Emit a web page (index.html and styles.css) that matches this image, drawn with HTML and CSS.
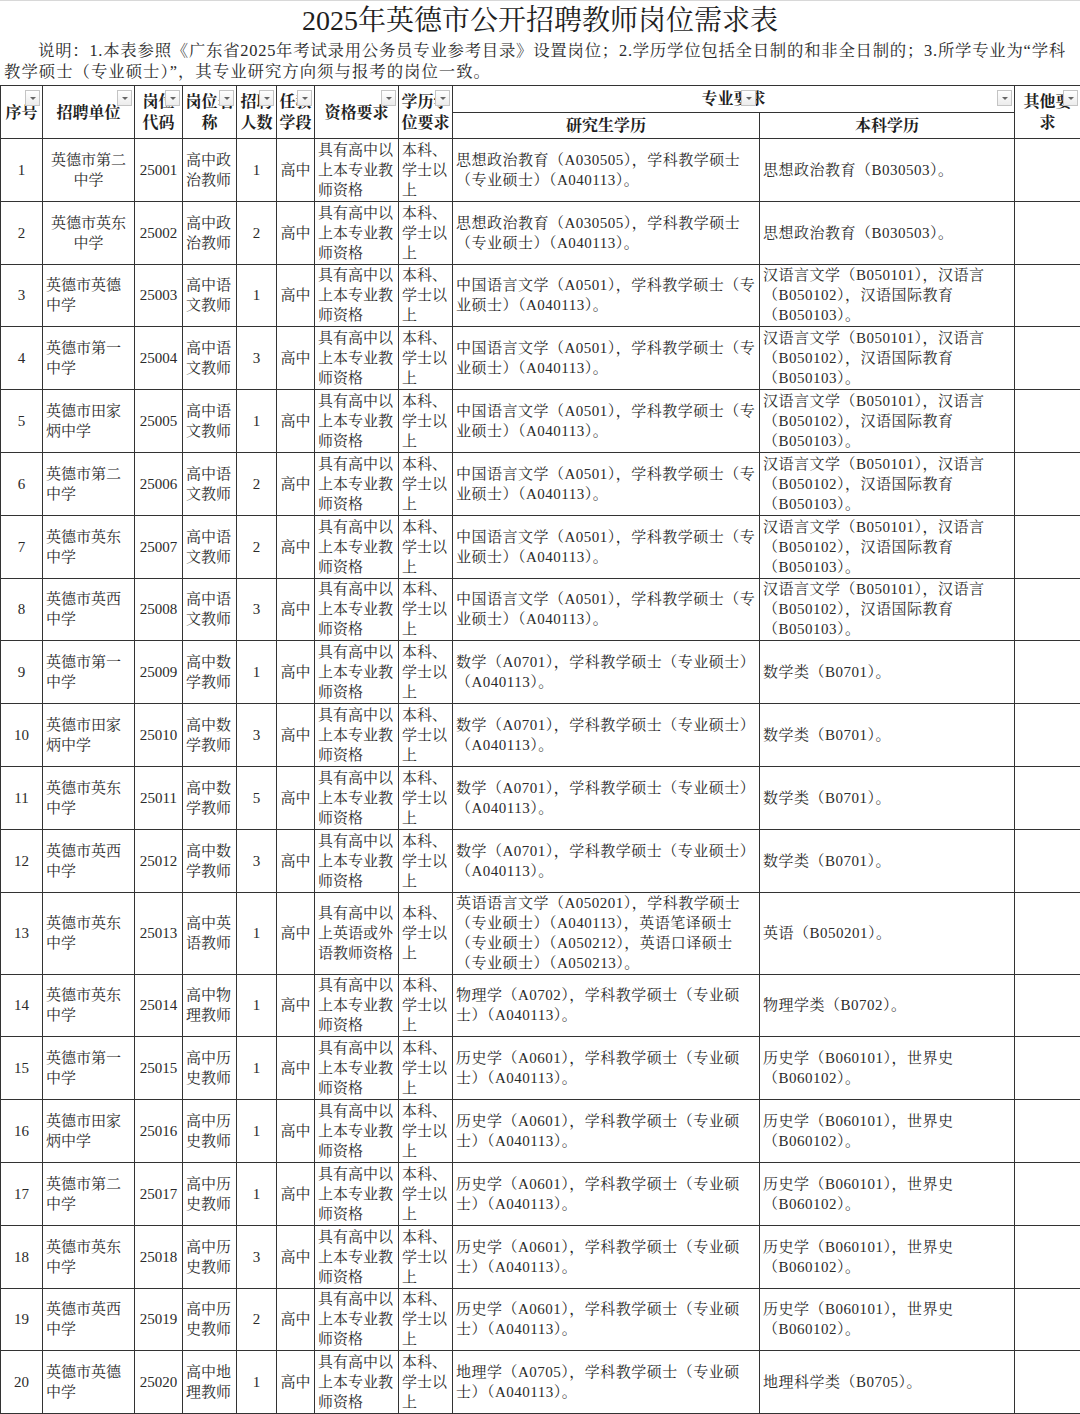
FILE: index.html
```html
<!DOCTYPE html>
<html lang="zh-CN">
<head>
<meta charset="utf-8">
<title>2025年英德市公开招聘教师岗位需求表</title>
<link rel="stylesheet" href="styles.css">
</head>
<body>
<div class="page">
  <h1 class="title">2025年英德市公开招聘教师岗位需求表</h1>
  <div class="note">
    <p class="note-line first">说明：1.本表参照《广东省2025年考试录用公务员专业参考目录》设置岗位；2.学历学位包括全日制的和非全日制的；3.所学专业为“学科</p>
    <p class="note-line second">教学硕士（专业硕士）”，其专业研究方向须与报考的岗位一致。</p>
  </div>
  <table class="grid">
    <colgroup>
      <col class="w-no"><col class="w-unit"><col class="w-code"><col class="w-post"><col class="w-num"><col class="w-stage"><col class="w-qual"><col class="w-deg"><col class="w-grad"><col class="w-bach"><col class="w-other">
    </colgroup>
    <thead>
      <tr class="h1">
        <th rowspan="2"><span class="ht">序号</span><span class="flt"></span></th>
        <th rowspan="2"><span class="ht">招聘单位</span><span class="flt"></span></th>
        <th rowspan="2"><span class="ht">岗位<br>代码</span><span class="flt"></span></th>
        <th rowspan="2"><span class="ht">岗位名<br>称</span><span class="flt"></span></th>
        <th rowspan="2"><span class="ht">招聘<br>人数</span><span class="flt"></span></th>
        <th rowspan="2"><span class="ht">任教<br>学段</span><span class="flt"></span></th>
        <th rowspan="2"><span class="ht">资格要求</span><span class="flt"></span></th>
        <th rowspan="2"><span class="ht">学历学<br>位要求</span><span class="flt"></span></th>
        <th colspan="2" class="major"><span class="ht">专业要求</span><span class="flt flt-mid"></span><span class="flt"></span></th>
        <th rowspan="2"><span class="ht">其他要<br>求</span><span class="flt"></span></th>
      </tr>
      <tr class="h2">
        <th>研究生学历</th>
        <th>本科学历</th>
      </tr>
    </thead>
    <tbody>
      <tr><td class="c">1</td><td class="c">英德市第二<br>中学</td><td class="c">25001</td><td class="l">高中政<br>治教师</td><td class="c">1</td><td class="c">高中</td><td class="l">具有高中以<br>上本专业教<br>师资格</td><td class="l">本科、<br>学士以<br>上</td><td class="l">思想政治教育（A030505），学科教学硕士<br>（专业硕士）（A040113）。</td><td class="l">思想政治教育（B030503）。</td><td></td></tr>
      <tr><td class="c">2</td><td class="c">英德市英东<br>中学</td><td class="c">25002</td><td class="l">高中政<br>治教师</td><td class="c">2</td><td class="c">高中</td><td class="l">具有高中以<br>上本专业教<br>师资格</td><td class="l">本科、<br>学士以<br>上</td><td class="l">思想政治教育（A030505），学科教学硕士<br>（专业硕士）（A040113）。</td><td class="l">思想政治教育（B030503）。</td><td></td></tr>
      <tr><td class="c">3</td><td class="l">英德市英德<br>中学</td><td class="c">25003</td><td class="l">高中语<br>文教师</td><td class="c">1</td><td class="c">高中</td><td class="l">具有高中以<br>上本专业教<br>师资格</td><td class="l">本科、<br>学士以<br>上</td><td class="l">中国语言文学（A0501），学科教学硕士（专<br>业硕士）（A040113）。</td><td class="l">汉语言文学（B050101），汉语言<br>（B050102），汉语国际教育<br>（B050103）。</td><td></td></tr>
      <tr><td class="c">4</td><td class="l">英德市第一<br>中学</td><td class="c">25004</td><td class="l">高中语<br>文教师</td><td class="c">3</td><td class="c">高中</td><td class="l">具有高中以<br>上本专业教<br>师资格</td><td class="l">本科、<br>学士以<br>上</td><td class="l">中国语言文学（A0501），学科教学硕士（专<br>业硕士）（A040113）。</td><td class="l">汉语言文学（B050101），汉语言<br>（B050102），汉语国际教育<br>（B050103）。</td><td></td></tr>
      <tr><td class="c">5</td><td class="l">英德市田家<br>炳中学</td><td class="c">25005</td><td class="l">高中语<br>文教师</td><td class="c">1</td><td class="c">高中</td><td class="l">具有高中以<br>上本专业教<br>师资格</td><td class="l">本科、<br>学士以<br>上</td><td class="l">中国语言文学（A0501），学科教学硕士（专<br>业硕士）（A040113）。</td><td class="l">汉语言文学（B050101），汉语言<br>（B050102），汉语国际教育<br>（B050103）。</td><td></td></tr>
      <tr><td class="c">6</td><td class="l">英德市第二<br>中学</td><td class="c">25006</td><td class="l">高中语<br>文教师</td><td class="c">2</td><td class="c">高中</td><td class="l">具有高中以<br>上本专业教<br>师资格</td><td class="l">本科、<br>学士以<br>上</td><td class="l">中国语言文学（A0501），学科教学硕士（专<br>业硕士）（A040113）。</td><td class="l">汉语言文学（B050101），汉语言<br>（B050102），汉语国际教育<br>（B050103）。</td><td></td></tr>
      <tr><td class="c">7</td><td class="l">英德市英东<br>中学</td><td class="c">25007</td><td class="l">高中语<br>文教师</td><td class="c">2</td><td class="c">高中</td><td class="l">具有高中以<br>上本专业教<br>师资格</td><td class="l">本科、<br>学士以<br>上</td><td class="l">中国语言文学（A0501），学科教学硕士（专<br>业硕士）（A040113）。</td><td class="l">汉语言文学（B050101），汉语言<br>（B050102），汉语国际教育<br>（B050103）。</td><td></td></tr>
      <tr><td class="c">8</td><td class="l">英德市英西<br>中学</td><td class="c">25008</td><td class="l">高中语<br>文教师</td><td class="c">3</td><td class="c">高中</td><td class="l">具有高中以<br>上本专业教<br>师资格</td><td class="l">本科、<br>学士以<br>上</td><td class="l">中国语言文学（A0501），学科教学硕士（专<br>业硕士）（A040113）。</td><td class="l">汉语言文学（B050101），汉语言<br>（B050102），汉语国际教育<br>（B050103）。</td><td></td></tr>
      <tr><td class="c">9</td><td class="l">英德市第一<br>中学</td><td class="c">25009</td><td class="l">高中数<br>学教师</td><td class="c">1</td><td class="c">高中</td><td class="l">具有高中以<br>上本专业教<br>师资格</td><td class="l">本科、<br>学士以<br>上</td><td class="l">数学（A0701），学科教学硕士（专业硕士）<br>（A040113）。</td><td class="l">数学类（B0701）。</td><td></td></tr>
      <tr><td class="c">10</td><td class="l">英德市田家<br>炳中学</td><td class="c">25010</td><td class="l">高中数<br>学教师</td><td class="c">3</td><td class="c">高中</td><td class="l">具有高中以<br>上本专业教<br>师资格</td><td class="l">本科、<br>学士以<br>上</td><td class="l">数学（A0701），学科教学硕士（专业硕士）<br>（A040113）。</td><td class="l">数学类（B0701）。</td><td></td></tr>
      <tr><td class="c">11</td><td class="l">英德市英东<br>中学</td><td class="c">25011</td><td class="l">高中数<br>学教师</td><td class="c">5</td><td class="c">高中</td><td class="l">具有高中以<br>上本专业教<br>师资格</td><td class="l">本科、<br>学士以<br>上</td><td class="l">数学（A0701），学科教学硕士（专业硕士）<br>（A040113）。</td><td class="l">数学类（B0701）。</td><td></td></tr>
      <tr><td class="c">12</td><td class="l">英德市英西<br>中学</td><td class="c">25012</td><td class="l">高中数<br>学教师</td><td class="c">3</td><td class="c">高中</td><td class="l">具有高中以<br>上本专业教<br>师资格</td><td class="l">本科、<br>学士以<br>上</td><td class="l">数学（A0701），学科教学硕士（专业硕士）<br>（A040113）。</td><td class="l">数学类（B0701）。</td><td></td></tr>
      <tr class="tall"><td class="c">13</td><td class="l">英德市英东<br>中学</td><td class="c">25013</td><td class="l">高中英<br>语教师</td><td class="c">1</td><td class="c">高中</td><td class="l">具有高中以<br>上英语或外<br>语教师资格</td><td class="l">本科、<br>学士以<br>上</td><td class="l">英语语言文学（A050201），学科教学硕士<br>（专业硕士）（A040113），英语笔译硕士<br>（专业硕士）（A050212），英语口译硕士<br>（专业硕士）（A050213）。</td><td class="l">英语（B050201）。</td><td></td></tr>
      <tr><td class="c">14</td><td class="l">英德市英东<br>中学</td><td class="c">25014</td><td class="l">高中物<br>理教师</td><td class="c">1</td><td class="c">高中</td><td class="l">具有高中以<br>上本专业教<br>师资格</td><td class="l">本科、<br>学士以<br>上</td><td class="l">物理学（A0702），学科教学硕士（专业硕<br>士）（A040113）。</td><td class="l">物理学类（B0702）。</td><td></td></tr>
      <tr><td class="c">15</td><td class="l">英德市第一<br>中学</td><td class="c">25015</td><td class="l">高中历<br>史教师</td><td class="c">1</td><td class="c">高中</td><td class="l">具有高中以<br>上本专业教<br>师资格</td><td class="l">本科、<br>学士以<br>上</td><td class="l">历史学（A0601），学科教学硕士（专业硕<br>士）（A040113）。</td><td class="l">历史学（B060101），世界史<br>（B060102）。</td><td></td></tr>
      <tr><td class="c">16</td><td class="l">英德市田家<br>炳中学</td><td class="c">25016</td><td class="l">高中历<br>史教师</td><td class="c">1</td><td class="c">高中</td><td class="l">具有高中以<br>上本专业教<br>师资格</td><td class="l">本科、<br>学士以<br>上</td><td class="l">历史学（A0601），学科教学硕士（专业硕<br>士）（A040113）。</td><td class="l">历史学（B060101），世界史<br>（B060102）。</td><td></td></tr>
      <tr><td class="c">17</td><td class="l">英德市第二<br>中学</td><td class="c">25017</td><td class="l">高中历<br>史教师</td><td class="c">1</td><td class="c">高中</td><td class="l">具有高中以<br>上本专业教<br>师资格</td><td class="l">本科、<br>学士以<br>上</td><td class="l">历史学（A0601），学科教学硕士（专业硕<br>士）（A040113）。</td><td class="l">历史学（B060101），世界史<br>（B060102）。</td><td></td></tr>
      <tr><td class="c">18</td><td class="l">英德市英东<br>中学</td><td class="c">25018</td><td class="l">高中历<br>史教师</td><td class="c">3</td><td class="c">高中</td><td class="l">具有高中以<br>上本专业教<br>师资格</td><td class="l">本科、<br>学士以<br>上</td><td class="l">历史学（A0601），学科教学硕士（专业硕<br>士）（A040113）。</td><td class="l">历史学（B060101），世界史<br>（B060102）。</td><td></td></tr>
      <tr><td class="c">19</td><td class="l">英德市英西<br>中学</td><td class="c">25019</td><td class="l">高中历<br>史教师</td><td class="c">2</td><td class="c">高中</td><td class="l">具有高中以<br>上本专业教<br>师资格</td><td class="l">本科、<br>学士以<br>上</td><td class="l">历史学（A0601），学科教学硕士（专业硕<br>士）（A040113）。</td><td class="l">历史学（B060101），世界史<br>（B060102）。</td><td></td></tr>
      <tr><td class="c">20</td><td class="l">英德市英德<br>中学</td><td class="c">25020</td><td class="l">高中地<br>理教师</td><td class="c">1</td><td class="c">高中</td><td class="l">具有高中以<br>上本专业教<br>师资格</td><td class="l">本科、<br>学士以<br>上</td><td class="l">地理学（A0705），学科教学硕士（专业硕<br>士）（A040113）。</td><td class="l">地理科学类（B0705）。</td><td></td></tr>
    </tbody>
  </table>
</div>
</body>
</html>
```

FILE: styles.css
```css
html, body {
  margin: 0;
  padding: 0;
  background: #ffffff;
}

body {
  font-family: "Liberation Serif", "Noto Serif CJK SC", "Noto Sans CJK SC", serif;
  color: #2a2a2a;
}

.page {
  width: 1080px;
  border-top: 1px solid #d8d8d8;
}

.title {
  margin: 0;
  height: 39px;
  line-height: 39px;
  font-size: 28px;
  font-weight: normal;
  text-align: center;
  color: #1e1e1e;
}

.note {
  padding: 0 0 0 4px;
  font-size: 16.4px;
  line-height: 21px;
  color: #2a2a2a;
}

.note-line {
  margin: 0;
  white-space: nowrap;
}

.note-line.first {
  text-indent: 34px;
  letter-spacing: 0.75px;
}

.note-line.second {
  letter-spacing: 1px;
}

.grid {
  margin-top: 3px;
  width: 1080px;
  table-layout: fixed;
  border-collapse: collapse;
  font-size: 15px;
  line-height: 20px;
}

.w-no { width: 42px; }
.w-unit { width: 92px; }
.w-code { width: 48px; }
.w-post { width: 54px; }
.w-num { width: 40px; }
.w-stage { width: 38px; }
.w-qual { width: 84px; }
.w-deg { width: 54px; }
.w-grad { width: 307px; }
.w-bach { width: 255px; }
.w-other { width: 66px; }

.grid th,
.grid td {
  border: 1px solid #333333;
  padding: 0 3px;
  vertical-align: middle;
  white-space: nowrap;
  overflow: hidden;
}

.grid tbody td:nth-child(9),
.grid tbody td:nth-child(10) {
  letter-spacing: 0.5px;
}

.grid th {
  position: relative;
  font-weight: bold;
  font-size: 16px;
  line-height: 21px;
  text-align: center;
  color: #1e1e1e;
  padding: 0;
}

.grid tr.h1 { height: 27px; }
.grid tr.h2 { height: 26px; }

.grid th.major {
  vertical-align: top;
  padding-top: 2px;
}

.grid tbody tr { height: 62.8px; }
.grid tbody tr.tall { height: 82px; }

.grid td.c { text-align: center; }
.grid td.l { text-align: left; }

.flt {
  position: absolute;
  top: 4px;
  right: 2px;
  width: 15px;
  height: 16px;
  box-sizing: border-box;
  border: 1px solid #c4c4c4;
  background: linear-gradient(#ffffff, #ececec);
}

.flt::after {
  content: "";
  position: absolute;
  left: 4px;
  top: 6px;
  border-left: 3px solid transparent;
  border-right: 3px solid transparent;
  border-top: 3px solid #666666;
}

.flt.flt-mid {
  right: auto;
  left: 288px;
}
```
